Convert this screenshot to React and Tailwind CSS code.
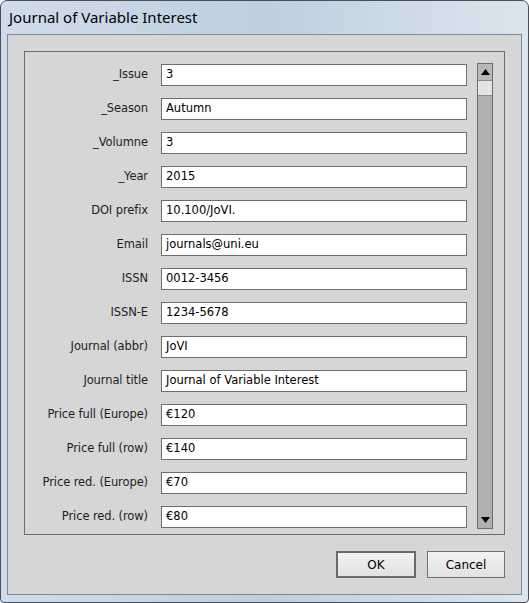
import React from "react";

const rows = [
  ["_Issue", "3"],
  ["_Season", "Autumn"],
  ["_Volumne", "3"],
  ["_Year", "2015"],
  ["DOI prefix", "10.100/JoVI."],
  ["Email", "journals@uni.eu"],
  ["ISSN", "0012-3456"],
  ["ISSN-E", "1234-5678"],
  ["Journal (abbr)", "JoVI"],
  ["Journal title", "Journal of Variable Interest"],
  ["Price full (Europe)", "€120"],
  ["Price full (row)", "€140"],
  ["Price red. (Europe)", "€70"],
  ["Price red. (row)", "€80"],
];

export default function App() {
  return (
    <div className="w-[529px] h-[603px] bg-white">
      <div
        className="w-[529px] h-[603px] flex flex-col rounded-t-[7px] rounded-b-[4px] border border-[#4b4f55] bg-gradient-to-r from-[#cfdceb] via-[#bfcfdf] to-[#dbe5ef]"
        style={{ fontFamily: '"DejaVu Sans", Tahoma, sans-serif' }}
      >
        <div
          className="h-[33px] flex items-center pl-[8px] text-[15px] text-black"
          style={{ fontFamily: '"Noto Sans", "Open Sans", sans-serif' }}
        >
          Journal of Variable Interest
        </div>
        <div className="mx-[6px] mb-[7px] flex-1 border border-[#7b8a9a] bg-[#d6d6d6] flex flex-col px-[16px] pt-[16px] pb-[15px]">
          <div className="border border-[#6e6e6e] h-[484px] flex pt-[11px] pl-[1px] pr-[11px]">
            <div className="flex flex-col gap-[12px] pt-[1px]">
              {rows.map(([label, value]) => (
                <div key={label} className="flex items-center h-[22px]">
                  <div className="w-[122px] text-right text-[11.5px] text-[#1e1e1e] tracking-[-0.1px]">
                    {label}
                  </div>
                  <div className="ml-[13px] w-[306px] h-[22px] bg-white border border-[#6e6e6e] flex items-center pl-[4px] text-[11.5px] text-black">
                    {value}
                  </div>
                </div>
              ))}
            </div>
            <div className="ml-[10px] w-[16px] h-[466px] border border-[#6e6e6e] bg-[#b0b0b0] flex flex-col">
              <div className="h-[17px] bg-[#b8b8b8] border-b border-[#8a8a8a] flex items-center justify-center">
                <svg width="9" height="6" viewBox="0 0 9 6">
                  <polygon points="4.5,0 9,6 0,6" fill="#000" />
                </svg>
              </div>
              <div className="h-[15px] bg-[#e4e4e4] border-b border-[#8a8a8a]" />
              <div className="flex-1" />
              <div className="h-[17px] flex items-center justify-center">
                <svg width="9" height="6" viewBox="0 0 9 6">
                  <polygon points="0,0 9,0 4.5,6" fill="#000" />
                </svg>
              </div>
            </div>
          </div>
          <div className="flex justify-end gap-[11px] mt-[16px]">
            <button className="w-[80px] h-[27px] border-2 border-[#6a6a6a] bg-gradient-to-b from-[#f2f2f2] to-[#e2e2e2] text-[12px] text-black">
              OK
            </button>
            <button className="w-[78px] h-[27px] border border-[#707070] bg-gradient-to-b from-[#f2f2f2] to-[#e2e2e2] text-[12px] text-black">
              Cancel
            </button>
          </div>
        </div>
      </div>
    </div>
  );
}
